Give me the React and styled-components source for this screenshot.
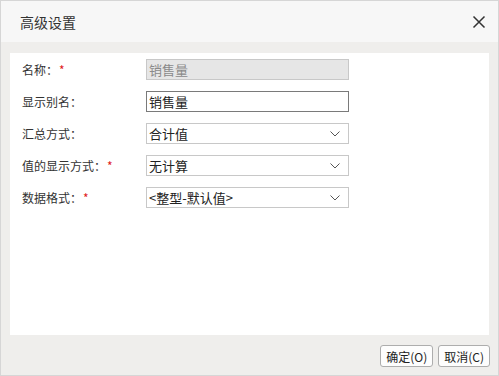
import React from 'react';
import styled, { createGlobalStyle } from 'styled-components';

const Global = createGlobalStyle`
  html, body { margin: 0; padding: 0; background: #fff; }
  body { font-family: "Microsoft YaHei", "Noto Sans CJK SC", "Liberation Sans", sans-serif; }
`;

const Dialog = styled.div`
  width: 499px; height: 376px; box-sizing: border-box;
  border: 1px solid #d6d6d6;
  background: #efeeec;
  display: flex; flex-direction: column;
`;

const Header = styled.div`
  height: 41px; background: #f7f7f7;
  display: flex; align-items: center; justify-content: space-between;
  padding: 0 12px 0 19px;
`;

const Title = styled.div`
  font-size: 14px; color: #333;
`;

const Close = styled.svg`
  width: 14px; height: 14px; display: block;
`;

const Panel = styled.div`
  margin: 11px 9px 0 9px; height: 282px;
  background: #fff;
  padding: 6px 0 0 12px; box-sizing: border-box;
  display: flex; flex-direction: column; gap: 11px;
`;

const Row = styled.div`
  display: flex; align-items: center; height: 21px;
`;

const Label = styled.div`
  width: 124px; font-size: 12px; color: #333;
`;

const Star = styled.span`
  color: #e02020; margin-left: 1px;
`;

const Field = styled.div`
  width: 203px; height: 21px; box-sizing: border-box;
  border: 1px solid ${p => p.$dark ? '#7a7a7a' : '#c8c8c8'};
  background: ${p => p.$disabled ? '#e6e6e6' : '#fff'};
  color: ${p => p.$disabled ? '#8a8a8a' : '#222'};
  font-size: 13px; padding: 0 8px 0 2px;
  display: flex; align-items: center; justify-content: space-between;
`;

const Footer = styled.div`
  flex: 1; display: flex; justify-content: flex-end; align-items: center;
  gap: 5px; padding: 2px 8px 0 0;
`;

const Btn = styled.button`
  height: 22px; padding: 0 5px; box-sizing: border-box;
  border: 1px solid #adadad; border-radius: 3px; background: #fdfdfd;
  font-family: inherit; font-size: 12px; color: #222;
`;

const Chevron = () => (
  <svg width="10" height="6" viewBox="0 0 10 6">
    <path d="M0.5 0.5 L5 5 L9.5 0.5" fill="none" stroke="#555" strokeWidth="1" />
  </svg>
);

const rows = [
  { label: '名称：', req: true, value: '销售量', disabled: true },
  { label: '显示别名：', value: '销售量', dark: true },
  { label: '汇总方式：', value: '合计值', select: true },
  { label: '值的显示方式：', req: true, value: '无计算', select: true },
  { label: '数据格式：', req: true, value: '<整型-默认值>', select: true },
];

export default function App() {
  return (
    <>
      <Global />
      <Dialog>
        <Header>
          <Title>高级设置</Title>
          <Close viewBox="0 0 14 14">
            <path d="M1.5 1.5 L12.5 12.5 M12.5 1.5 L1.5 12.5" stroke="#333" strokeWidth="1.5" />
          </Close>
        </Header>
        <Panel>
          {rows.map(r => (
            <Row key={r.label}>
              <Label>{r.label}{r.req && <Star>*</Star>}</Label>
              <Field $disabled={r.disabled} $dark={r.dark}>
                <span>{r.value}</span>
                {r.select && <Chevron />}
              </Field>
            </Row>
          ))}
        </Panel>
        <Footer>
          <Btn>确定(O)</Btn>
          <Btn>取消(C)</Btn>
        </Footer>
      </Dialog>
    </>
  );
}
